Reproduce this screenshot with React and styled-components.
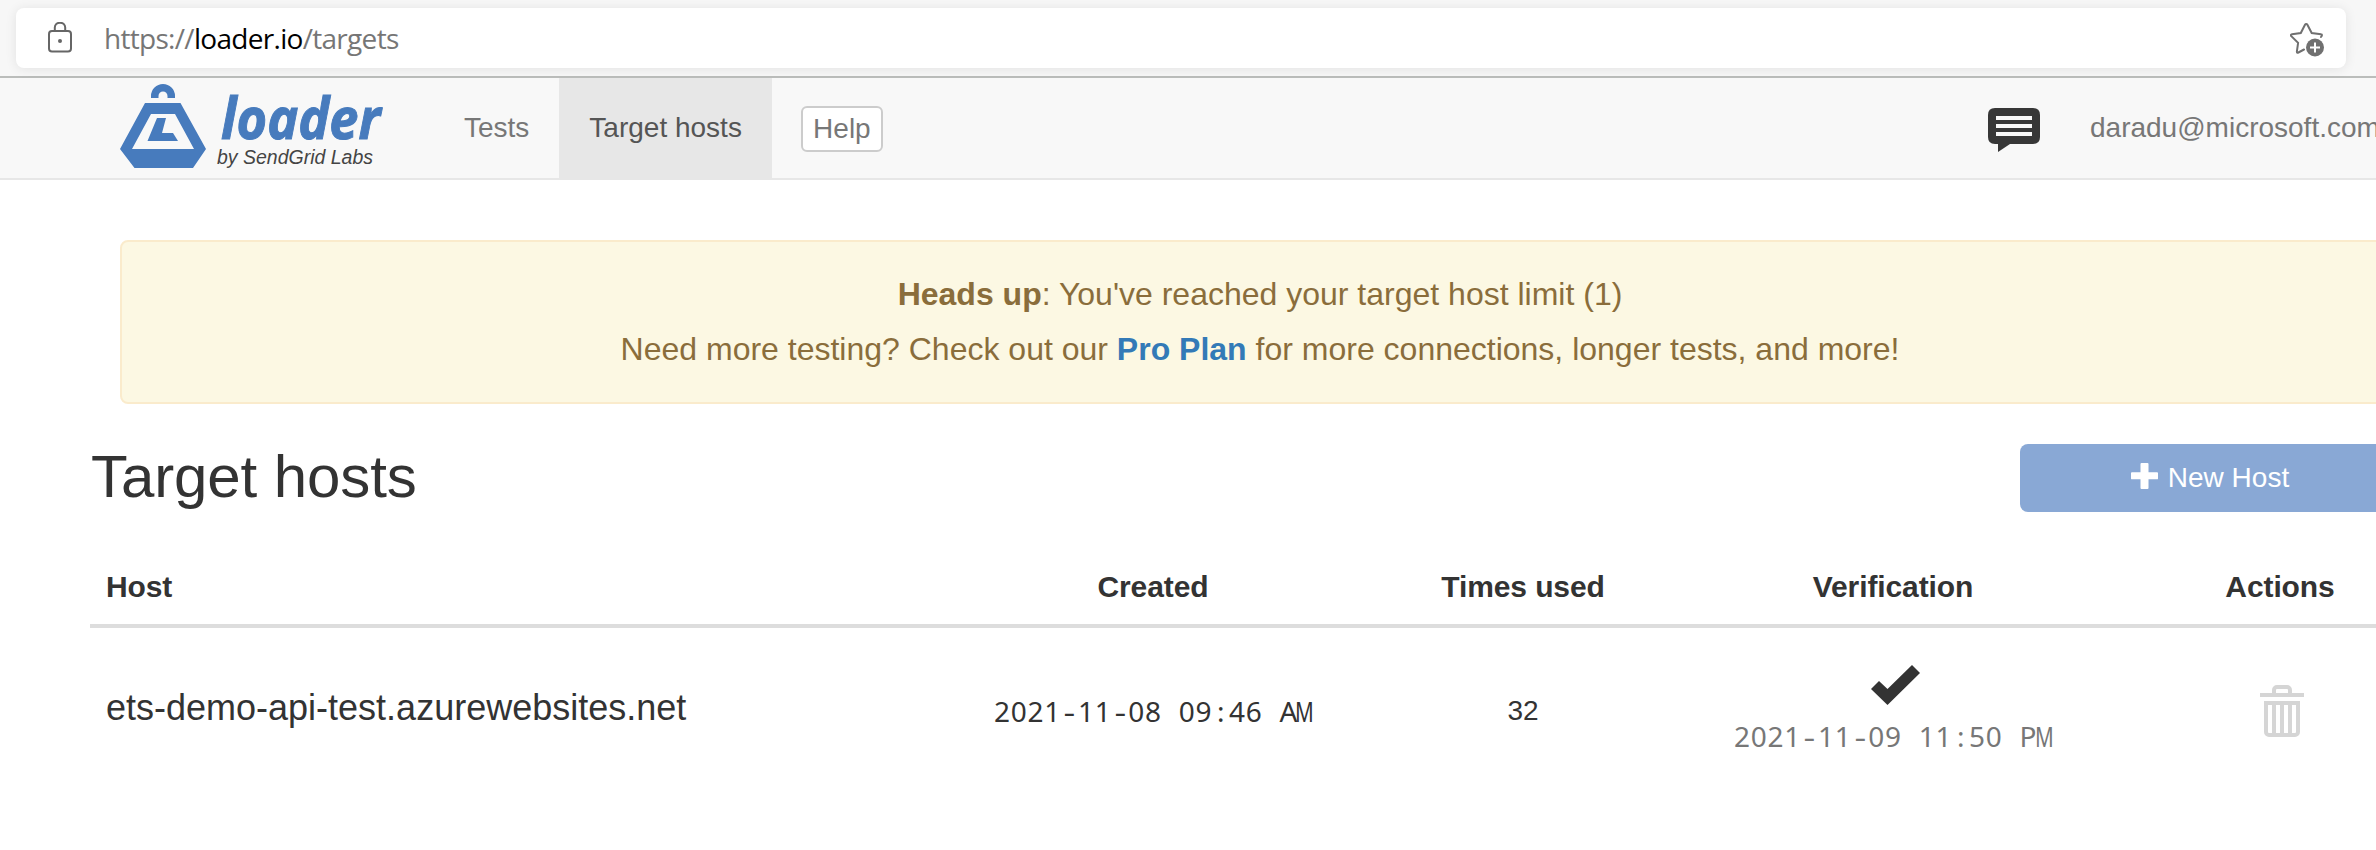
import React from "react";
import styled, { createGlobalStyle } from "styled-components";

const GlobalStyle = createGlobalStyle`
  *, *::before, *::after { box-sizing: border-box; }
  html, body { margin: 0; background: #fff; overflow: hidden; }
  body { font-family: "Liberation Sans", Arial, sans-serif; color: #333; }
`;

const Page = styled.div`
  width: 2376px;
  height: 850px;
  overflow: hidden;
`;

const Chrome = styled.div`
  height: 78px;
  padding: 8px 30px 0 16px;
  background: #f7f7f7;
  border-bottom: 2px solid #bbbdbb;
`;

const AddressBar = styled.div`
  height: 60px;
  padding: 0 20px 0 32px;
  display: flex;
  align-items: center;
  background: #fff;
  border-radius: 8px;
  box-shadow: 0 1px 12px rgba(0, 0, 0, 0.09);
`;

const Url = styled.div`
  flex: 1;
  margin-left: 31px;
  font: 28px/38px "Open Sans", sans-serif;
  letter-spacing: -0.7px;
  color: #767676;
  white-space: nowrap;
`;

const Domain = styled.span`
  color: #000;
`;

const StarIcon = styled.svg`
  width: 36px;
  height: 36px;
  margin-top: 3px;
`;

const Navbar = styled.header`
  height: 102px;
  padding-left: 120px;
  display: flex;
  background: #f8f8f8;
  border-bottom: 2px solid #e7e7e7;
`;

const Brand = styled.svg`
  width: 314px;
  height: 100px;
  flex: none;
`;

const NavItem = styled.a`
  height: 100px;
  padding: 0 30px;
  font-size: 28px;
  line-height: 99px;
  white-space: nowrap;
  color: ${(p) => (p.$active ? "#555" : "#777")};
  background: ${(p) => (p.$active ? "#e7e7e7" : "transparent")};
`;

const HelpButton = styled.button`
  width: 82px;
  height: 46px;
  margin: 28px 0 0 29px;
  padding: 0;
  font: 28px/42px "Liberation Sans", Arial, sans-serif;
  color: #777;
  background: #fff;
  border: 2px solid #ccc;
  border-radius: 6px;
`;

const Account = styled.div`
  margin-left: auto;
  width: 388px;
  flex: none;
  display: flex;
  overflow: hidden;
`;

const ChatIcon = styled.svg`
  width: 52px;
  height: 44px;
  margin: 30px 20px 0 0;
  flex: none;
`;

const Main = styled.main`
  width: 2392px;
  padding: 60px 0 0 90px;
`;

const Alert = styled.section`
  width: 2280px;
  height: 164px;
  margin-left: 30px;
  padding-top: 25px;
  text-align: center;
  font-size: 32px;
  line-height: 55px;
  color: #8a6d3b;
  background: #fcf8e3;
  border: 2px solid #faebcc;
  border-radius: 8px;
`;

const AlertLine = styled.p`
  margin: 0;
`;

const PlanLink = styled.a`
  font-weight: bold;
  color: #337ab7;
`;

const TitleRow = styled.div`
  width: 2310px;
  margin-top: 40px;
  height: 68px;
  display: flex;
  justify-content: space-between;
`;

const Title = styled.h1`
  margin: 0;
  padding-left: 1px;
  font-size: 60px;
  font-weight: 400;
  line-height: 65px;
  letter-spacing: -0.1px;
`;

const NewHostButton = styled.button`
  width: 380px;
  height: 68px;
  padding: 0;
  display: flex;
  align-items: center;
  justify-content: center;
  gap: 10px;
  font: 28px "Liberation Sans", Arial, sans-serif;
  color: #fff;
  background: #89a8d5;
  border: 0;
  border-radius: 8px;
`;

const PlusIcon = styled.svg`
  width: 27px;
  height: 26px;
  margin-bottom: 4px;
`;

const TableRow = styled.div`
  display: grid;
  grid-template-columns: 878px 370px 370px 370px 404px;
`;

const HeadRow = styled(TableRow)`
  margin-top: 47px;
  height: 69px;
  border-bottom: 4px solid #ddd;
`;

const HeadCell = styled.div`
  padding-left: ${(p) => (p.$first ? 16 : 0)}px;
  text-align: ${(p) => (p.$first ? "left" : "center")};
  font-size: 30px;
  font-weight: bold;
  line-height: 55px;
  letter-spacing: -0.1px;
`;

const Cell = styled.div`
  padding-top: ${(p) => p.$top}px;
  text-align: center;
  font-size: 28px;
  line-height: 40px;
  white-space: nowrap;
`;

const HostName = styled(Cell)`
  padding-left: 16px;
  text-align: left;
  font-size: 36px;
`;

const ActionCell = styled(Cell)`
  padding-left: 4px;
`;

const Stamp = styled.div`
  font: 28px/40px "Noto Sans", sans-serif;
  letter-spacing: 0.78px;
  color: ${(p) => (p.$muted ? "#777" : "#333")};
`;

const Slot = styled.span`
  display: inline-block;
  width: 16.8px;
  letter-spacing: 0;
  text-align: center;
  white-space: pre;
  transform: scaleX(${(p) => (p.$wide ? 1.3 : 1)});
`;

const NarrowM = styled.span`
  display: inline-block;
  width: 16.8px;
  margin-left: -1px;
  letter-spacing: 0;
  transform: scaleX(0.74);
  transform-origin: left;
`;

const CheckIcon = styled.svg`
  display: block;
  width: 49px;
  height: 40px;
  margin: 0 0 11px 163px;
`;

function Timestamp({ value, muted }) {
  return (
    <Stamp $muted={muted}>
      {value.split(/([-: APM])/).filter(Boolean).map((part, i) => {
        if (part === "M") return <NarrowM key={i}>{part}</NarrowM>;
        if (/^[-: AP]$/.test(part)) {
          return (
            <Slot key={i} $wide={part === "-"}>
              {part}
            </Slot>
          );
        }
        return part;
      })}
    </Stamp>
  );
}

function LockIcon() {
  return (
    <svg width="25" height="32" viewBox="0 0 25 32" fill="none" stroke="#666" strokeWidth="2">
      <rect x="1" y="9" width="22" height="20.5" rx="3" />
      <path d="M6.8 9V5.5a5.2 4.8 0 0 1 10.4 0V9" />
      <circle cx="12" cy="19" r="2" fill="#666" stroke="none" />
    </svg>
  );
}

function FavoriteIcon() {
  return (
    <StarIcon viewBox="0 0 36 36">
      <path
        d="M31 15C32.4 13.2 32.2 12.3 31 12.2L21.7 11L17.4 2.8C16.8 1.7 15.6 1.7 15 2.8L10.8 11L2 12.2C.8 12.4.5 13.2 1.3 14.1L8.1 20.8L6.9 29.3C6.7 30.6 7.4 31 8.4 30.5L14 27.5"
        fill="none"
        stroke="#707070"
        strokeWidth="2"
        strokeLinecap="round"
      />
      <circle cx="25" cy="25.5" r="9" fill="#707070" />
      <path d="M25 20.5v10M20 25.5h10" stroke="#fff" strokeWidth="2" />
    </StarIcon>
  );
}

function LoaderLogo() {
  return (
    <Brand viewBox="0 0 314 100">
      <g fill="#477bbd">
        <path d="M31 20V18a12 12 0 0 1 24 0v2h-7.5v-2a4.5 4.5 0 0 0-9 0v2z" />
        <path
          fillRule="evenodd"
          d="M25 25H60.5L86 71L73 90H14.5L0 71ZM31 36L12 71H74L55 36Z"
        />
        <path d="M37 40H46L42 55H53L58 63H27.5Z" />
        <text
          x="101"
          y="60.5"
          fontFamily="Open Sans, sans-serif"
          fontSize="57"
          fontWeight="700"
          fontStyle="italic"
          stroke="#477bbd"
          strokeWidth="1"
          textLength="159.5"
          lengthAdjust="spacingAndGlyphs"
        >
          loader
        </text>
      </g>
      <text
        x="97"
        y="85.5"
        fill="#444"
        fontFamily="Liberation Sans, Arial, sans-serif"
        fontSize="20.5"
        fontStyle="italic"
        textLength="156"
        lengthAdjust="spacingAndGlyphs"
      >
        by SendGrid Labs
      </text>
    </Brand>
  );
}

function TrashIcon() {
  return (
    <svg width="44" height="52" viewBox="0 0 44 52" fill="none" stroke="#d5d5d5" strokeWidth="4">
      <path d="M0 10H44" />
      <path d="M14 9V5a3 3 0 0 1 3-3H27a3 3 0 0 1 3 3V9" />
      <path d="M6 18H38V47a3 3 0 0 1-3 3H9a3 3 0 0 1-3-3Z" />
      <path d="M14 18V50M22 18V50M30 18V50" />
    </svg>
  );
}

export default function App() {
  return (
    <Page>
      <GlobalStyle />
      <Chrome>
        <AddressBar>
          <LockIcon />
          <Url>
            https://<Domain>loader.io</Domain>/targets
          </Url>
          <FavoriteIcon />
        </AddressBar>
      </Chrome>

      <Navbar>
        <LoaderLogo />
        <NavItem>Tests</NavItem>
        <NavItem $active>Target hosts</NavItem>
        <HelpButton>Help</HelpButton>
        <Account>
          <ChatIcon viewBox="0 0 52 44">
            <path
              d="M7 0H45Q52 0 52 7V29Q52 36 45 36H22L10 44V36H7Q0 36 0 29V7Q0 0 7 0Z"
              fill="#373737"
            />
            <path d="M8 10H44M8 18H44M8 26H44" stroke="#f8f8f8" strokeWidth="4" />
          </ChatIcon>
          <NavItem>daradu@microsoft.com</NavItem>
        </Account>
      </Navbar>

      <Main>
        <Alert>
          <AlertLine>
            <b>Heads up</b>: You've reached your target host limit (1)
          </AlertLine>
          <AlertLine>
            Need more testing? Check out our <PlanLink>Pro Plan</PlanLink> for more connections,
            longer tests, and more!
          </AlertLine>
        </Alert>

        <TitleRow>
          <Title>Target hosts</Title>
          <NewHostButton>
            <PlusIcon viewBox="0 0 27 27" preserveAspectRatio="none">
              <path
                d="M10.5 0h6q1 0 1 1v8.5H26q1 0 1 1v5.5q0 1-1 1h-8.5v9q0 1-1 1h-6q-1 0-1-1v-9H1q-1 0-1-1v-5.5q0-1 1-1h8.5V1q0-1 1-1z"
                fill="#fff"
              />
            </PlusIcon>
            New Host
          </NewHostButton>
        </TitleRow>

        <HeadRow>
          <HeadCell $first>Host</HeadCell>
          <HeadCell>Created</HeadCell>
          <HeadCell>Times used</HeadCell>
          <HeadCell>Verification</HeadCell>
          <HeadCell>Actions</HeadCell>
        </HeadRow>
        <TableRow>
          <HostName $top={60}>ets-demo-api-test.azurewebsites.net</HostName>
          <Cell $top={63}>
            <Timestamp value="2021-11-08 09:46 AM" />
          </Cell>
          <Cell $top={63}>32</Cell>
          <Cell $top={37}>
            <CheckIcon viewBox="0 0 49 40">
              <path d="M0 24L8 16L16.5 24L41 0L49 8L16.5 40Z" fill="#333" />
            </CheckIcon>
            <Timestamp value="2021-11-09 11:50 PM" muted />
          </Cell>
          <ActionCell $top={57}>
            <TrashIcon />
          </ActionCell>
        </TableRow>
      </Main>
    </Page>
  );
}
